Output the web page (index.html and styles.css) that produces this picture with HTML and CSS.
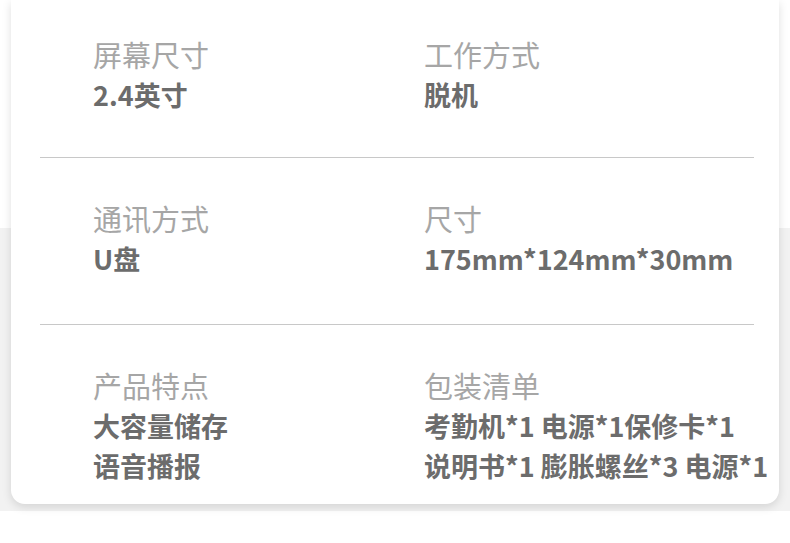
FILE: index.html
```html
<!DOCTYPE html>
<html lang="zh-CN">
<head>
<meta charset="utf-8">
<link rel="stylesheet" href="styles.css">
</head>
<body>
<div class="page">
  <div class="card">
    <div class="row first">
      <div class="cell">
        <div class="label">屏幕尺寸</div>
        <div class="value">2.4英寸</div>
      </div>
      <div class="cell">
        <div class="label">工作方式</div>
        <div class="value">脱机</div>
      </div>
    </div>
    <div class="row">
      <div class="cell">
        <div class="label">通讯方式</div>
        <div class="value">U盘</div>
      </div>
      <div class="cell">
        <div class="label">尺寸</div>
        <div class="value">175mm*124mm*30mm</div>
      </div>
    </div>
    <div class="row last">
      <div class="cell">
        <div class="label">产品特点</div>
        <div class="value">大容量储存</div>
        <div class="value">语音播报</div>
      </div>
      <div class="cell">
        <div class="label">包装清单</div>
        <div class="value nowrap">考勤机*1 电源*1保修卡*1</div>
        <div class="value nowrap">说明书*1 膨胀螺丝*3 电源*1</div>
      </div>
    </div>
  </div>
</div>
</body>
</html>
```

FILE: styles.css
```css
html, body {
  margin: 0;
  padding: 0;
  background: #fff;
}
body {
  font-family: "Noto Sans CJK SC", "Noto Sans", sans-serif;
  width: 790px;
  height: 543px;
  overflow: hidden;
}
.page {
  height: 543px;
  padding: 0 11px;
  box-sizing: border-box;
  background: linear-gradient(#fff 0, #fff 228px, #f2f2f2 228px, #f2f2f2 511px, #fff 511px);
}
.card {
  background: #fff;
  border-radius: 0 0 14px 14px;
  box-shadow: 0 3px 10px rgba(0, 0, 0, 0.13);
  padding: 0 25px 0 29px;
  overflow: hidden;
}
.row {
  display: grid;
  grid-template-columns: 331px 331px;
  padding: 39px 0 45px 53px;
  border-bottom: 1px solid #c8c8c8;
}
.row.first {
  padding-top: 33px;
  padding-bottom: 42px;
}
.row.last {
  border-bottom: none;
  padding-bottom: 18px;
}
.cell {
  display: flex;
  flex-direction: column;
}
.label {
  font-size: 29px;
  line-height: 42px;
  color: #a6a6a6;
}
.value {
  font-size: 27px;
  line-height: 40px;
  font-weight: 700;
  color: #6c6c6c;
}
.nowrap {
  white-space: nowrap;
}
```
